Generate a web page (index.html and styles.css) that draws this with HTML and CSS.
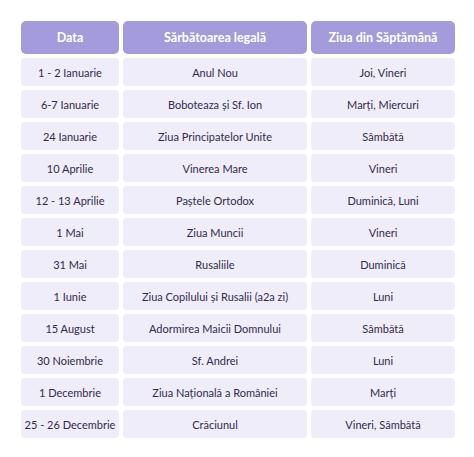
FILE: index.html
```html
<!DOCTYPE html>
<html lang="ro">
<head>
<meta charset="utf-8">
<link rel="stylesheet" href="styles.css">
</head>
<body>
<div class="table">
  <div class="cell head">Data</div>
  <div class="cell head">Sărbătoarea legală</div>
  <div class="cell head">Ziua din Săptămână</div>

  <div class="cell">1 - 2 Ianuarie</div>
  <div class="cell">Anul Nou</div>
  <div class="cell">Joi, Vineri</div>

  <div class="cell">6-7 Ianuarie</div>
  <div class="cell">Boboteaza și Sf. Ion</div>
  <div class="cell">Marți, Miercuri</div>

  <div class="cell">24 Ianuarie</div>
  <div class="cell">Ziua Principatelor Unite</div>
  <div class="cell">Sâmbătă</div>

  <div class="cell">10 Aprilie</div>
  <div class="cell">Vinerea Mare</div>
  <div class="cell">Vineri</div>

  <div class="cell">12 - 13 Aprilie</div>
  <div class="cell">Paștele Ortodox</div>
  <div class="cell">Duminică, Luni</div>

  <div class="cell">1 Mai</div>
  <div class="cell">Ziua Muncii</div>
  <div class="cell">Vineri</div>

  <div class="cell">31 Mai</div>
  <div class="cell">Rusaliile</div>
  <div class="cell">Duminică</div>

  <div class="cell">1 Iunie</div>
  <div class="cell">Ziua Copilului și Rusalii (a2a zi)</div>
  <div class="cell">Luni</div>

  <div class="cell">15 August</div>
  <div class="cell">Adormirea Maicii Domnului</div>
  <div class="cell">Sâmbătă</div>

  <div class="cell">30 Noiembrie</div>
  <div class="cell">Sf. Andrei</div>
  <div class="cell">Luni</div>

  <div class="cell">1 Decembrie</div>
  <div class="cell">Ziua Națională a României</div>
  <div class="cell">Marți</div>

  <div class="cell">25 - 26 Decembrie</div>
  <div class="cell">Crăciunul</div>
  <div class="cell">Vineri, Sâmbătă</div>
</div>
</body>
</html>
```

FILE: styles.css
```css
html, body {
  margin: 0;
  padding: 0;
  background: #ffffff;
}

body {
  padding: 21px 19px 0 21px;
  font-family: "Lato", "Noto Sans", sans-serif;
}

.table {
  display: grid;
  grid-template-columns: 98px 184px 144px;
  grid-template-rows: 33px;
  grid-auto-rows: 28px;
  column-gap: 4px;
  row-gap: 4px;
}

.cell {
  display: flex;
  align-items: center;
  justify-content: center;
  background: #efedf9;
  border-radius: 4px;
  color: #33294f;
  font-size: 11px;
  white-space: nowrap;
}

.head {
  background: #a39bdc;
  color: #ffffff;
  font-weight: 700;
  font-size: 12.5px;
  border-radius: 5px;
}
```
